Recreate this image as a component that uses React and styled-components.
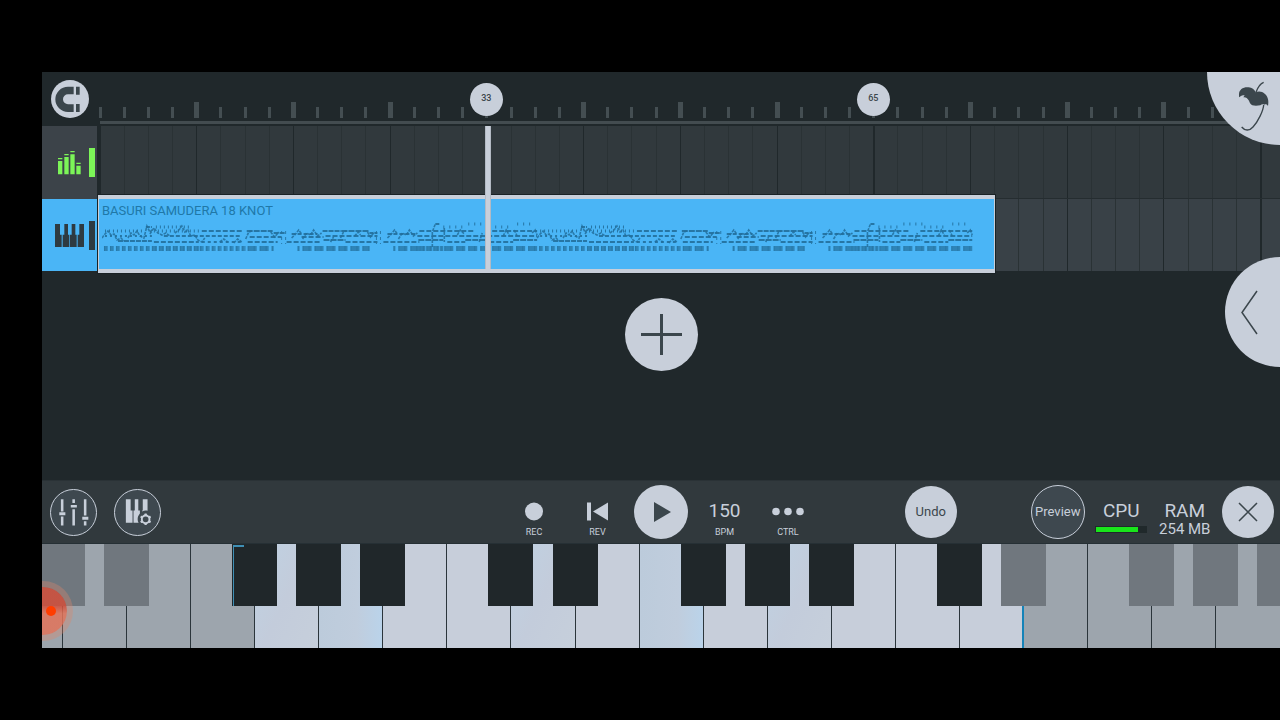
import React from "react"
import styled, { createGlobalStyle, css } from "styled-components"

const colors = {
  light: "#c8cfda",
  ink: "#3b464c",
  stage: "#20282b",
  panel: "#31393d",
  laneAlt: "#394147",
  clip: "#4ab5f6",
  clipInk: "#2078a8",
  green: "#7cf558",
}

const VISIBLE_BARS = 97.6
const BARS_PER_TICK = 2

const barToPercent = bar => `${((bar - 1) / VISIBLE_BARS) * 100}%`

const GlobalStyle = createGlobalStyle`
  * {
    box-sizing: border-box;
  }

  body {
    margin: 0;
    background: #000;
    color: ${colors.light};
    font-family: Roboto, "Liberation Sans", sans-serif;
  }

  button {
    padding: 0;
    border: 0;
    background: none;
    color: inherit;
    font: inherit;
    cursor: pointer;
  }

  svg {
    display: block;
  }
`

const Page = styled.div`
  display: flex;
  min-height: 100vh;
  padding: 72px 0 72px 42px;
`

const Studio = styled.main`
  position: relative;
  display: flex;
  flex: 1;
  flex-direction: column;
  min-width: 0;
  overflow: hidden;
  background: ${colors.stage};
`

/* Playlist */

const Playlist = styled.section`
  display: grid;
  grid-template-columns: 58px 1fr;
`

const TrackList = styled.div`
  display: flex;
  flex-direction: column;
  padding-right: 3px;
`

const SnapCell = styled.div`
  display: flex;
  align-items: center;
  height: 54px;
  padding-left: 9px;
`

const RoundButton = styled.button`
  display: flex;
  flex: none;
  align-items: center;
  justify-content: center;
  width: ${props => props.$size}px;
  height: ${props => props.$size}px;
  border-radius: 50%;
  background: ${colors.light};
  color: ${colors.ink};

  ${props =>
    props.$outlined &&
    css`
      border: 1px solid ${colors.light};
      background: #3e484f;
      color: ${colors.light};
    `}
`

const RoundTextButton = styled(RoundButton)`
  padding-bottom: 2px;
  font-size: 13px;
`

const TrackButton = styled.button`
  display: flex;
  align-items: center;
  justify-content: flex-end;
  gap: 5px;
  height: ${props => (props.$selected ? 72 : 73)}px;
  padding-right: 2px;
  background: ${props => (props.$selected ? colors.clip : "#3c4349")};
  color: ${props => (props.$selected ? "#2e3a41" : colors.green)};
`

const TrackMeter = styled.span`
  width: 6px;
  height: 29px;
  background: currentColor;
`

const Timeline = styled.div`
  position: relative;
  min-width: 0;
`

const Ruler = styled.div`
  position: relative;
  height: 54px;

  svg {
    width: 100%;
    height: 54px;
    overflow: visible;
  }
`

const Marker = styled.span`
  position: absolute;
  top: 11px;
  width: 33px;
  height: 33px;
  margin-left: -17px;
  border-radius: 50%;
  background: ${colors.light};
  color: ${colors.ink};
  font-size: 9px;
  font-weight: 500;
  line-height: 31px;
  text-align: center;
`

const Lane = styled.div`
  position: relative;
  height: ${props => (props.$alt ? 72 : 73)}px;
  border-bottom: ${props => (props.$alt ? 0 : 1)}px solid #252d30;
  background: ${props => (props.$alt ? colors.laneAlt : colors.panel)};

  > svg {
    width: 100%;
    height: 100%;
  }
`

const Clip = styled.div`
  position: absolute;
  top: -4px;
  bottom: -2px;
  left: -2px;
  padding: 4px 0 0 3px;
  border: solid ${colors.light};
  border-width: 4px 1px;
  background: ${colors.clip};
  box-shadow: 0 0 0 1px #1a2225;
  color: ${colors.clipInk};
  font-size: 13px;
  line-height: 16px;

  svg {
    width: 98%;
    height: 32px;
    margin-top: 1px;
  }
`

const Playhead = styled.div`
  position: absolute;
  top: 54px;
  bottom: 2px;
  width: 6px;
  margin-left: -2px;
  border: solid #b3bac4;
  border-width: 0 1px;
  background: ${colors.light};
`

const Arrangement = styled.div`
  display: flex;
  flex: 1;
  justify-content: center;
  padding: 27px 0;
`

const LogoButton = styled.button`
  position: absolute;
  top: -73px;
  right: -73px;
  width: 146px;
  height: 146px;
  border-radius: 50%;
  background: ${colors.light};
  color: ${colors.ink};

  svg {
    position: absolute;
    top: 73px;
    left: 0;
  }
`

const DrawerButton = styled.button`
  position: absolute;
  top: 185px;
  right: -55px;
  width: 110px;
  height: 110px;
  padding-left: 15px;
  border-radius: 50%;
  background: ${colors.light};
  color: ${colors.ink};
`

/* Transport */

const Toolbar = styled.nav`
  display: flex;
  height: 63px;
  border-top: 1px solid #2a3236;
  background: ${colors.panel};
`

const Slot = styled.div`
  display: flex;
  flex: 1 1 0;
  align-items: center;
  justify-content: center;
  min-width: 0;
`

const Spacer = styled.div`
  flex: ${props => props.$slots} 1 0;
`

const TransportButton = styled.button`
  display: flex;
  flex-direction: column;
  align-items: center;
  gap: 6px;
  font-size: 9px;
  line-height: 10px;
`

const TransportValue = styled.span`
  display: flex;
  align-items: center;
  height: 20px;
  font-size: 19px;
`

const TransportItem = styled(Slot)`
  align-items: flex-start;
  padding-top: 20px;
`

const Stat = styled.div`
  display: flex;
  flex-direction: column;
  align-items: center;
  font-size: 15px;
  line-height: 19px;
  white-space: nowrap;
`

const StatName = styled.span`
  font-size: 19px;
`

const LoadTrack = styled.div`
  width: 52px;
  height: 7px;
  margin-top: 6px;
  padding: 1px;
  background: #20292b;
`

const LoadFill = styled.div`
  height: 5px;
  background: #19e51b;
`

/* Keyboard */

const Keyboard = styled.section`
  position: relative;
  display: flex;
  height: 105px;
  border-top: 1px solid #263035;
  overflow: hidden;
`

const KeySlot = styled.div`
  position: relative;
  display: flex;
  flex: ${props => (props.$partial ? 0.33 : 1)} 1 0;
`

const keyTints = {
  soft: "linear-gradient(115deg, #bfd2e3, #c3ccdb 50%, #c6cfdb)",
  strong: "linear-gradient(90deg, #bccbdb, #c0cddd 60%, #bad3ea)",
}

const WhiteKey = styled.button`
  flex: 1;
  border-right: ${props => (props.$rangeEnd ? "2px solid #1583b8" : "1px solid #2b353b")};
  background: ${props =>
    props.$inRange ? keyTints[props.$tint] || "#c7ceda" : "#9da5ad"};

  ${KeySlot}:nth-last-of-type(1) > & {
    border-right: 0;
  }
`

const BlackKey = styled.button`
  position: absolute;
  z-index: 1;
  top: 0;
  right: -22px;
  width: 45px;
  height: 62px;
  background: ${props => (props.$inRange ? "#20272a" : "#70777e")};
`

const RangeStart = styled.span`
  position: absolute;
  z-index: 2;
  top: 1px;
  right: 11px;
  width: 11px;
  height: 61px;
  border: solid #3f8fb5;
  border-width: 2px 0 0 1px;
`

const Touch = styled.span`
  position: absolute;
  z-index: 3;
  top: 37px;
  left: -29px;
  width: 60px;
  height: 60px;
  border: 6px solid rgba(222, 134, 106, 0.35);
  border-radius: 50%;
  background: linear-gradient(rgba(210, 78, 58, 0.85) 40%, rgba(226, 115, 90, 0.85) 55%);
  background-clip: padding-box;

  &::after {
    position: absolute;
    top: 19px;
    left: 27px;
    width: 10px;
    height: 10px;
    border-radius: 50%;
    background: #ff3d00;
    content: "";
  }
`

const MagnetIcon = () => (
  <svg width="37" height="37" viewBox="0 0 111 111" fill="currentColor">
    <path d="M65 17H48a38 38 0 0 0 0 76h17V70H48a15 15 0 0 1 0-30h17z" />
    <path d="M72 17h11v24H72zM72 69h11v24H72z" />
  </svg>
)

const LevelsIcon = () => (
  <svg width="29" height="25" viewBox="0 0 87 75" fill="currentColor">
    <path d="M9 33h13v40H9zM28 21h13v52H28zM46 13h13v60H46zM64 47h13v26H64z" />
    <path d="M9 24h13v4H9zM28 12h13v4H28zM46 3h13v4H46zM64 38h13v4H64z" />
  </svg>
)

const KeysIcon = () => (
  <svg width="29" height="23" viewBox="0 0 87 69" fill="currentColor">
    <path d="M0 0h15v32h5v37H0zM28 0h11v32h4v37H23V32h5zM50 0h11v32h4v37H45V32h5zM73 0h14v69H68V32h5z" />
  </svg>
)

const MixerIcon = () => (
  <svg width="47" height="47" viewBox="0 0 141 141" fill="currentColor">
    <path d="M31 29h8v38h-8zM26 70h19v9H26zM31 83h8v28h-8z" />
    <path d="M67 29h8v12h-8zM62 47h19v8H62zM67 60h8v51h-8z" />
    <path d="M103 29h8v51h-8zM98 84h19v9H98zM103 98h8v13h-8z" />
  </svg>
)

const KeySettingsIcon = () => (
  <svg width="47" height="47" viewBox="0 0 141 141" fill="currentColor">
    <path d="M34 29h15v35h6v39H34zM62 29h11v35h5v10c-5 6-7 11-7 18 0 4 1 8 3 11H58V64h4zM87 29h15v36c-6-2-11-1-17 2v-3h2z" />
    <circle cx="96" cy="92" r="12" fill="none" stroke="currentColor" strokeWidth="6" />
    {[0, 60, 120, 180, 240, 300].map(angle => (
      <path key={angle} d="M91 80l2-6h6l2 6z" transform={`rotate(${angle} 96 92)`} />
    ))}
  </svg>
)

const PlusIcon = () => (
  <svg width="41" height="41" viewBox="0 0 41 41" stroke="currentColor" strokeWidth="3">
    <path d="M0 20.500h41M20.500 0v41" />
  </svg>
)

const ChevronIcon = () => (
  <svg width="18" height="45" viewBox="0 0 18 45" fill="none" stroke="currentColor" strokeWidth="1.500">
    <path d="M17 1L2 22.500 17 44" />
  </svg>
)

const FruitIcon = () => (
  <svg width="73" height="73" viewBox="0 0 219 219">
    <path
      d="M96 67c0-15 14-23 29-21 10 1 17 6 21 15 8-5 20-3 27 4 10 8 13 21 10 37-3-5-7-6-11-4-4-2-8-2-12 2-9 2-18 2-24 0-5-3-8-8-10-14-5-8-10-11-17-10l4-6c-6 0-10 1-17 6z"
      fill="currentColor"
    />
    <path
      d="M170 31c-9 3-17 13-23 30M170 99c-1 17-17 50-32 66-11 13-25 11-34 0"
      fill="none"
      stroke="currentColor"
      strokeWidth="4"
    />
  </svg>
)

const RecordIcon = () => (
  <svg width="20" height="20" viewBox="0 0 20 20" fill="currentColor">
    <circle cx="10" cy="10.500" r="9" />
  </svg>
)

const RewindIcon = () => (
  <svg width="22" height="20" viewBox="0 0 22 20" fill="currentColor">
    <path d="M0 1.500h4v18H0zM21 1.500v18L6 10.500z" />
  </svg>
)

const PlayIcon = () => (
  <svg width="20" height="20" viewBox="0 0 20 20" fill="currentColor">
    <path d="M3 0v20l17-10z" />
  </svg>
)

const DotsIcon = () => (
  <svg width="32" height="20" viewBox="0 0 32 20" fill="currentColor">
    <circle cx="4" cy="10.500" r="3.800" />
    <circle cx="16" cy="10.500" r="3.800" />
    <circle cx="28" cy="10.500" r="3.800" />
  </svg>
)

const CloseIcon = () => (
  <svg width="20" height="20" viewBox="0 0 20 20" stroke="currentColor" strokeWidth="1.500">
    <path d="M1 1l18 18M19 1L1 19" />
  </svg>
)

const ticks = Array.from({ length: 49 }, (_, index) => ({
  index,
  x: barToPercent(1 + index * BARS_PER_TICK),
}))

const RulerTicks = () => (
  <svg shapeRendering="crispEdges">
    {ticks.map(({ index, x }) => {
      const large = index % 4 === 0 && index % 16 !== 0
      return (
        <line
          key={index}
          x1={x}
          x2={x}
          y1={large ? 30 : 35}
          y2={46}
          stroke="#444e52"
          strokeWidth={large ? 5 : 3}
        />
      )
    })}
    <rect y="49" width="100%" height="3" fill="#434c50" />
  </svg>
)

const LaneGrid = () => (
  <svg shapeRendering="crispEdges">
    {ticks.map(({ index, x }) => (
      <line
        key={index}
        x1={x}
        x2={x}
        y1="0"
        y2="100%"
        stroke={index % 4 === 0 ? "#20282b" : "#2a3235"}
        strokeWidth={index % 16 === 0 ? 2 : 1}
      />
    ))}
  </svg>
)

// Rows of repeated notes: [start, end, y, note length, gap]
const noteRows = [
  [3, 41, 11, 1, 3],
  [54, 88, 7, 1, 3],
  [52, 100, 11, 1, 3],
  [44, 50, 7, 4, 1],
  [100, 142, 11, 5, 2],
  [3, 52, 16, 2, 3],
  [62, 140, 16, 4, 2],
  [16, 50, 21, 5, 1],
  [52, 94, 22, 5, 2],
  [94, 142, 22, 3, 3],
  [145, 171, 11, 6, 1],
  [148, 180, 17, 5, 2],
  [146, 176, 22, 5, 2],
  [172, 184, 13, 5, 1],
  [190, 216, 14, 4, 2],
  [185, 218, 22, 5, 2],
  [200, 222, 17, 5, 2],
  [221, 240, 11, 5, 1],
  [222, 244, 20, 6, 1],
  [224, 276, 16, 5, 2],
  [240, 267, 11, 6, 1],
  [244, 276, 22, 5, 2],
  [268, 276, 13, 4, 1],
  [286, 314, 14, 4, 2],
  [282, 318, 22, 5, 2],
  [316, 436, 16, 5, 2],
  [318, 372, 11, 5, 2],
  [317, 342, 20, 6, 1],
  [334, 339, 4, 4, 1],
  [342, 366, 7, 1, 5],
  [346, 364, 22, 5, 2],
  [364, 386, 20, 6, 1],
  [367, 386, 4, 1, 5],
  [384, 436, 11, 5, 2],
  [388, 410, 7, 1, 5],
  [388, 412, 22, 5, 2],
  [412, 436, 20, 6, 1],
  [416, 434, 4, 1, 5],
]

const melodies = [
  "M0 18l3-4 3-3 3 4 3-1 3 6 4-2 3 3",
  "M26 18l3-5 3 2 3-4 3 5 4 2 3-12 3 6 3-3",
  "M48 14l4-6 4 5 4 2 4-2 4 3",
  "M73 13l4-3 3-4 3 6 3-2 3 6 4-1 3 5 4 2 3-4",
  "M118 22l4-3 4 3M132 23l4-4 4 3",
  "M144 19l3-7 3-1M169 12l4 5 4-5",
  "M190 18l4-4 3-4 3 4M201 19l4-6 4 2 3-5 4 6 4-3",
  "M229 22l3-5M239 18l3-6 3-1M253 16l4-4 2 3M266 12l3 5 4-5",
  "M286 18l4-4 3-4 3 4M297 19l4-6 4 2 3-5 4 6 4-3",
  "M331 27V12l3-8M343 8v14M356 15l3-5 4 4",
  "M378 22l3-9M402 16l3-6 3 5M413 10l3 6M431 13l3-3 2 5",
]

// Bass blocks along the bottom: [start, end, block width, gap]
const bassBlocks = [
  [2, 50, 3, 3],
  [50, 98, 5, 2],
  [98, 144, 3, 3],
  [146, 172, 9, 3],
  [196, 198, 2, 3],
  [201, 268, 9, 3],
  [292, 294, 2, 3],
  [297, 318, 9, 3],
  [318, 342, 6, 1],
  [343, 436, 9, 3],
]

const Phrase = ({ x }) => (
  <g transform={`translate(${x} 0)`} fill="none" stroke="#226f9c">
    {noteRows.map(([start, end, y, length, gap], index) => (
      <path
        key={index}
        d={`M${start} ${y}H${end}`}
        strokeDasharray={`${length} ${gap}`}
        strokeWidth={length === 1 ? 3 : 2}
        opacity="0.900"
      />
    ))}
    {melodies.map(d => (
      <path key={d} d={d} strokeDasharray="3 1" strokeWidth="1.600" opacity="0.850" />
    ))}
    {bassBlocks.map(([start, end, width, gap]) => (
      <g key={start}>
        <path
          d={`M${start} 28.500H${end}`}
          strokeDasharray={`${width} ${gap}`}
          strokeWidth="5"
          opacity="0.700"
        />
        <path
          d={`M${start} 28.500H${end}`}
          strokeDasharray={`1 ${(width + gap) / 2 - 1}`}
          strokeWidth="5"
          opacity="0.500"
        />
      </g>
    ))}
    <path
      d="M180 11v13M184 11v13M275 11v13M279 11v13"
      strokeDasharray="3 3"
      opacity="0.850"
    />
  </g>
)

const ClipNotes = () => (
  <svg viewBox="0 0 876 32" preserveAspectRatio="none">
    <Phrase x={0} />
    <Phrase x={436} />
  </svg>
)

const whiteKeys = Array.from({ length: 20 }, (_, index) => ({
  index,
  inRange: index >= 4 && index <= 15,
  hasBlack: ![2, 6, 9, 13, 16].includes(index),
  blackInRange: index >= 3 && index <= 14,
  tint: { 4: "soft", 5: "strong", 8: "soft", 10: "strong", 12: "soft" }[index],
}))

const cpuLoad = 84

const App = () => (
  <Page>
    <GlobalStyle />
    <Studio>
      <Playlist>
        <TrackList>
          <SnapCell>
            <RoundButton $size={38} aria-label="Snap">
              <MagnetIcon />
            </RoundButton>
          </SnapCell>
          <TrackButton aria-label="Master track">
            <LevelsIcon />
            <TrackMeter />
          </TrackButton>
          <TrackButton $selected aria-label="Keys track">
            <KeysIcon />
            <TrackMeter />
          </TrackButton>
        </TrackList>
        <Timeline>
          <Ruler>
            <RulerTicks />
            {[33, 65].map(bar => (
              <Marker key={bar} style={{ left: barToPercent(bar) }}>
                {bar}
              </Marker>
            ))}
          </Ruler>
          <Lane>
            <LaneGrid />
          </Lane>
          <Lane $alt>
            <LaneGrid />
            <Clip style={{ width: barToPercent(75.2) }}>
              BASURI SAMUDERA 18 KNOT
              <ClipNotes />
            </Clip>
          </Lane>
          <Playhead style={{ left: barToPercent(33) }} />
        </Timeline>
      </Playlist>

      <Arrangement>
        <RoundButton $size={73} aria-label="Add track">
          <PlusIcon />
        </RoundButton>
      </Arrangement>

      <LogoButton aria-label="Menu">
        <FruitIcon />
      </LogoButton>
      <DrawerButton aria-label="Open drawer">
        <ChevronIcon />
      </DrawerButton>

      <Toolbar>
        <Slot>
          <RoundButton $size={47} $outlined aria-label="Mixer">
            <MixerIcon />
          </RoundButton>
        </Slot>
        <Slot>
          <RoundButton $size={47} $outlined aria-label="Keyboard settings">
            <KeySettingsIcon />
          </RoundButton>
        </Slot>
        <Spacer $slots={5.25} />
        <TransportItem>
          <TransportButton>
            <RecordIcon />
            REC
          </TransportButton>
        </TransportItem>
        <TransportItem>
          <TransportButton>
            <RewindIcon />
            REV
          </TransportButton>
        </TransportItem>
        <Slot>
          <RoundButton $size={54} aria-label="Play">
            <PlayIcon />
          </RoundButton>
        </Slot>
        <TransportItem>
          <TransportButton>
            <TransportValue>150</TransportValue>
            BPM
          </TransportButton>
        </TransportItem>
        <TransportItem>
          <TransportButton>
            <DotsIcon />
            CTRL
          </TransportButton>
        </TransportItem>
        <Spacer $slots={1.25} />
        <Slot>
          <RoundTextButton $size={52}>Undo</RoundTextButton>
        </Slot>
        <Spacer $slots={1} />
        <Slot>
          <RoundTextButton $size={54} $outlined>
            Preview
          </RoundTextButton>
        </Slot>
        <TransportItem>
          <Stat>
            <StatName>CPU</StatName>
            <LoadTrack>
              <LoadFill style={{ width: `${cpuLoad}%` }} />
            </LoadTrack>
          </Stat>
        </TransportItem>
        <TransportItem>
          <Stat>
            <StatName>RAM</StatName>
            254 MB
          </Stat>
        </TransportItem>
        <Slot>
          <RoundButton $size={52} aria-label="Close">
            <CloseIcon />
          </RoundButton>
        </Slot>
      </Toolbar>

      <Keyboard>
        {whiteKeys.map(({ index, inRange, hasBlack, blackInRange, tint }) => (
          <KeySlot key={index} $partial={index === 0}>
            <WhiteKey
              $inRange={inRange}
              $rangeEnd={index === 15}
              $tint={tint}
              aria-label={`White key ${index + 1}`}
            />
            {hasBlack && (
              <BlackKey $inRange={blackInRange} aria-label={`Black key ${index + 1}`} />
            )}
            {index === 3 && <RangeStart />}
          </KeySlot>
        ))}
        <Touch />
      </Keyboard>
    </Studio>
  </Page>
)

export default App
